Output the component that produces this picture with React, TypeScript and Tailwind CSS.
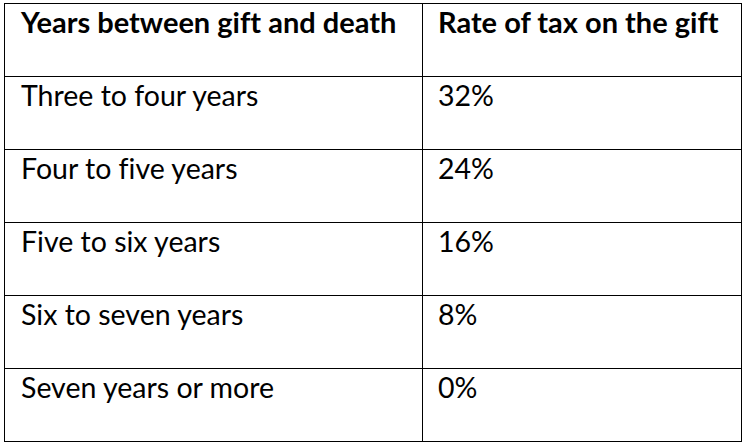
import React from 'react';

const rows: [string, string][] = [
  ['Three to four years', '32%'],
  ['Four to five years', '24%'],
  ['Five to six years', '16%'],
  ['Six to seven years', '8%'],
  ['Seven years or more', '0%'],
];

const cell = 'border-[1.5px] border-black align-top pt-[1px] text-left leading-[34px]';

export default function App() {
  return (
    <div
      className="w-[746px] h-[444px] bg-white pt-[3px] pl-[4px] [font-variant-ligatures:none]"
      style={{ fontFamily: 'Lato, "Open Sans", sans-serif' }}
    >
      <table className="border-collapse table-fixed w-[737px] text-black">
        <colgroup>
          <col className="w-[418px]" />
          <col className="w-[319px]" />
        </colgroup>
        <thead>
          <tr className="h-[73px]">
            <th className={`${cell} pl-[16px] font-bold text-[29px]`}>Years between gift and death</th>
            <th className={`${cell} pl-[15px] font-bold text-[29px]`}>Rate of tax on the gift</th>
          </tr>
        </thead>
        <tbody>
          {rows.map(([years, rate]) => (
            <tr key={years} className="h-[73px]">
              <td className={`${cell} pl-[16px] text-[28.5px]`}>{years}</td>
              <td className={`${cell} pl-[15px] text-[28.5px]`}>{rate}</td>
            </tr>
          ))}
        </tbody>
      </table>
    </div>
  );
}
